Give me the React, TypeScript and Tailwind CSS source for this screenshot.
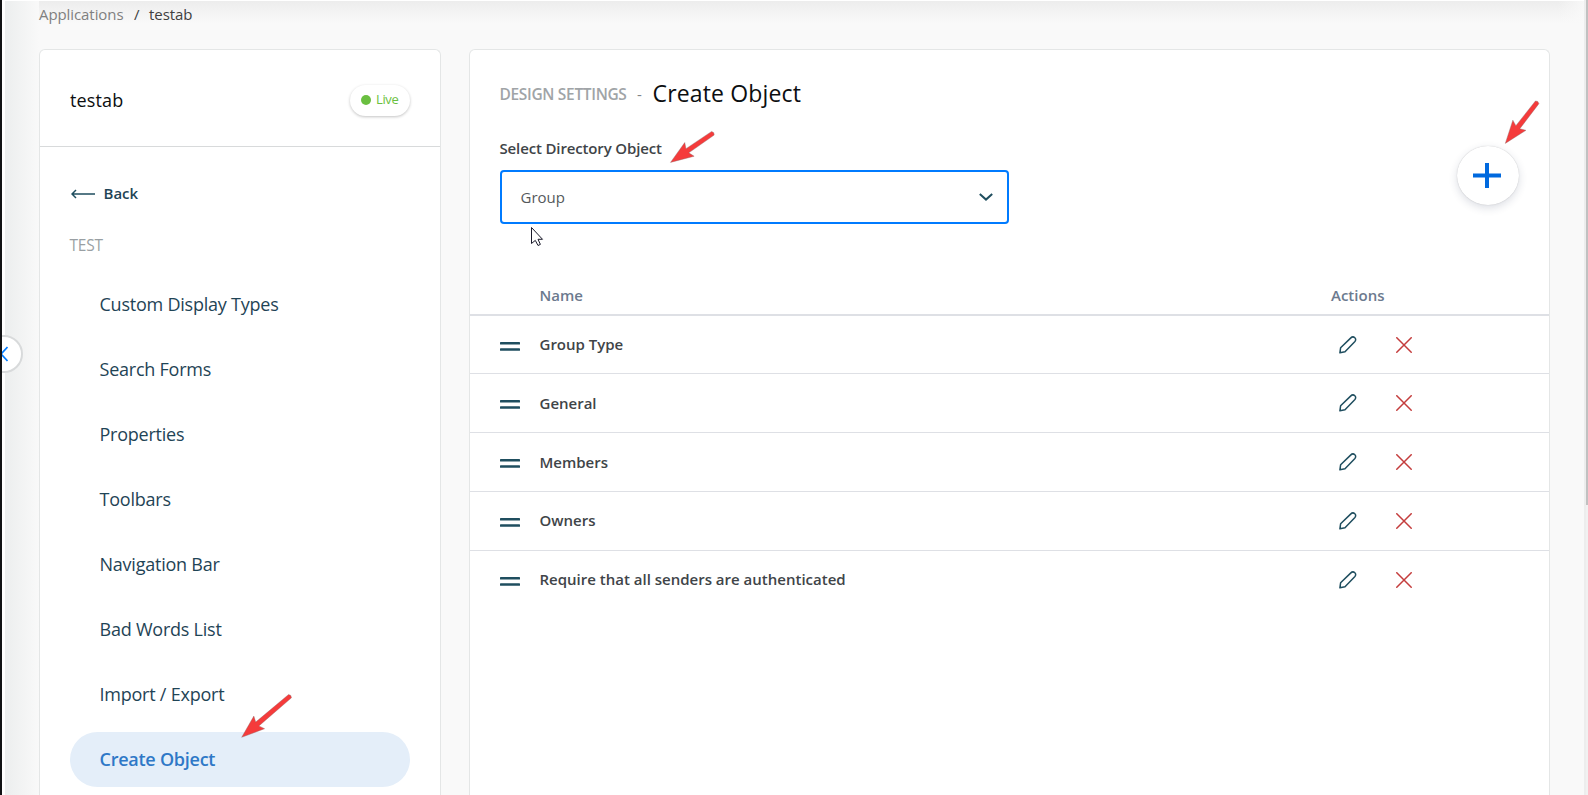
import React from "react";

const navItems = [
  "Custom Display Types",
  "Search Forms",
  "Properties",
  "Toolbars",
  "Navigation Bar",
  "Bad Words List",
  "Import / Export",
  "Create Object",
];

const rows = [
  { name: "Group Type", height: "h-[58px]", handle: "mt-[5px]", text: "", icons: "" },
  { name: "General", height: "h-[59px]", handle: "mt-[3px]", text: "", icons: "" },
  { name: "Members", height: "h-[59px]", handle: "mt-[3px]", text: "", icons: "" },
  { name: "Owners", height: "h-[59px]", handle: "mt-[3px]", text: "-mt-[2px]", icons: "" },
  {
    name: "Require that all senders are authenticated",
    height: "h-[59px]",
    handle: "mt-[2px]",
    text: "-mt-[2px]",
    icons: "-mt-[2px]",
  },
];

function Pencil() {
  return (
    <svg width="18" height="18" viewBox="0 0 18 18" fill="none" stroke="#1f4e5f" strokeWidth="1.5" strokeLinejoin="round" strokeLinecap="round">
      <path d="M0.9 16.8 L1.6 11.8 L11.6 2.1 C12.9 0.8 14.6 0.6 15.8 1.7 C17 2.8 16.9 4.5 15.7 5.8 L6 15.7 Z" />
    </svg>
  );
}

function Cross() {
  return (
    <svg width="16" height="16" viewBox="0 0 16 16" fill="none" stroke="#c43d3d" strokeWidth="1.5">
      <path d="M0.3 0.3 L15.7 15.7 M15.7 0.3 L0.3 15.7" />
    </svg>
  );
}

function Pointer({ x, y, angle, length }: { x: number; y: number; angle: number; length: number }) {
  return (
    <g transform={`translate(${x} ${y}) rotate(${angle})`}>
      <path
        d={`M0 0 L23 -8.3 L20.5 -2.5 L${length - 1} -2.2 L${length} 0 L${length - 1} 2.2 L20.5 2.5 L23 8.3 Z`}
        fill="#f53b3b"
        stroke="#8a6a6a"
        strokeOpacity="0.6"
        strokeWidth="0.6"
      />
    </g>
  );
}

export default function App() {
  return (
    <div className="relative flex h-[795px] w-[1588px] overflow-hidden bg-[#f9f9f9] font-['Open_Sans',sans-serif]">
      <div className="w-[2px] shrink-0 bg-[#111214]" />
      <div className="w-[3px] shrink-0 bg-white" />
      <div className="w-[34px] shrink-0 bg-gradient-to-r from-[#eceeee] to-[#f9f9f9]" />

      <div className="flex min-w-0 flex-1 flex-col">
        <header className="flex h-[49px] shrink-0 flex-col">
          <div className="-ml-[34px] h-px shrink-0 bg-white" />
          <div className="relative flex h-[22px] items-start bg-gradient-to-b from-[#ededed] to-[#f9f9f9] pt-[2px] text-[15px] leading-[23px]">
            <span className="w-[95px] tracking-[-0.08px] text-[#808080]">Applications</span>
            <span className="w-[15px] text-[#404040]">/</span>
            <span className="tracking-[-0.05px] text-[#404040]">testab</span>
            <div className="absolute inset-y-0 right-0 w-[30px] bg-gradient-to-r from-[#f9f9f9]/0 to-[#f9f9f9]" />
          </div>
        </header>

        <div className="flex min-h-0 flex-1 gap-[28px]">
          <aside className="w-[402px] shrink-0 rounded-t-[6px] border border-b-0 border-[#e4e6e6] bg-white">
            <div className="flex h-[97px] items-center justify-between border-b border-[#d8dadb] pr-[30px] pl-[30px]">
              <span className="pt-[4px] text-[18px] font-medium tracking-[0.15px] text-[#0c0e10]">testab</span>
              <span className="mt-[4px] flex h-[31px] w-[60px] items-center gap-[5px] rounded-full pl-[11px] text-[13px] tracking-[-0.35px] text-[#6abf40] shadow-[0_1px_3px_rgba(0,0,0,0.24)]">
                <i className="h-[10px] w-[10px] rounded-full bg-[#6abf40]" />
                <span className="-mt-px">Live</span>
              </span>
            </div>
            <div className="flex h-[92px] items-center gap-[9px] pl-[31px] text-[15px] font-semibold text-[#1f4456]">
              <svg className="mt-[2px] -ml-[0.5px]" width="24" height="10" viewBox="0 0 24 10" fill="none" stroke="#1f4e5f" strokeWidth="1.5">
                <path d="M24 5 H1.2 M5 1 L1 5 L5 9" />
              </svg>
              <span>Back</span>
            </div>
            <div className="-mt-[5px] h-[43px] pl-[29.5px] text-[15.5px] leading-[22px] tracking-[-0.25px] text-[#999fa3]">TEST</div>
            <nav className="flex flex-col gap-[10px] px-[30px]">
              {navItems.map((item) => (
                <a
                  key={item}
                  className={
                    item === "Create Object"
                      ? "flex h-[55px] items-center rounded-full bg-[#e4eef9] pl-[29.5px] text-[18px] font-semibold tracking-[-0.25px] text-[#2e78c7]"
                      : "flex h-[55px] items-center pl-[29.5px] text-[18px] tracking-[-0.23px] text-[#1f4456]"
                  }
                >
                  {item}
                </a>
              ))}
            </nav>
          </aside>

          <main className="w-[1081px] shrink-0 rounded-t-[6px] border border-b-0 border-[#e4e6e6] bg-white">
            <div className="flex h-[215px] justify-between pr-[30px] pl-[30px]">
              <div className="pt-[26px]">
                <h1 className="flex h-[34px] items-start">
                  <span className="-ml-[0.5px] w-[137.5px] pt-[7px] text-[15.5px] leading-[23px] font-semibold tracking-[-0.33px] text-[#a0a4a7]">
                    DESIGN SETTINGS
                  </span>
                  <span className="w-[16px] pt-[7px] text-[15px] leading-[23px] text-[#808488]">-</span>
                  <span className="-ml-[0.5px] text-[23px] leading-[34px] font-medium tracking-[0.15px] text-[#0c0e10]">Create Object</span>
                </h1>
                <label className="mt-[27px] -ml-[0.5px] block text-[15px] leading-[22px] font-semibold tracking-[-0.14px] text-[#404448]">
                  Select Directory Object
                </label>
                <div className="mt-[11px] flex h-[54px] w-[509px] items-center justify-between rounded-[4px] border-2 border-[#007bff] pr-[14px] pl-[18.5px] text-[15px] text-[#55595c]">
                  Group
                  <svg width="14" height="8" viewBox="0 0 14 8" fill="none" stroke="#1f4e5f" strokeWidth="2">
                    <path d="M0.8 1 L7 6.6 L13.2 1" />
                  </svg>
                </div>
              </div>
              <button className="mt-[96px] flex h-[59px] w-[62px] items-center justify-center rounded-[50%] bg-white shadow-[0_3px_8px_rgba(40,50,90,0.16),0_0_1px_rgba(0,0,0,0.25)]">
                <svg className="-ml-[2px]" width="28" height="25" viewBox="0 0 28 25" stroke="#0069de" strokeWidth="4">
                  <path d="M0 12.5 H28 M14 0 V25" />
                </svg>
              </button>
            </div>
            <div className="flex h-[51px] items-center border-b-2 border-[#dee0e5] pt-[11px] pl-[69.5px] text-[15px] font-semibold text-[#6c7a8e]">
              <span className="w-[791.5px]">Name</span>
              <span>Actions</span>
            </div>
            {rows.map((row, i) => (
              <div
                key={row.name}
                className={`flex items-center pl-[30px] ${row.height} ${i < rows.length - 1 ? "border-b border-[#dee0e5]" : ""}`}
              >
                <svg className={`mr-[19.5px] ${row.handle}`} width="20" height="10" viewBox="0 0 20 10" fill="#1f4e5f">
                  <rect y="0" width="20" height="2.6" rx="0.6" />
                  <rect y="6.2" width="20" height="2.6" rx="0.6" />
                </svg>
                <span className={`w-[799px] text-[15px] font-semibold text-[#404448] ${row.text}`}>{row.name}</span>
                <span className={`flex items-center gap-[39.5px] ${row.icons}`}>
                  <Pencil />
                  <Cross />
                </span>
              </div>
            ))}
          </main>
        </div>
      </div>

      <div className="absolute top-0 right-0 flex h-full w-[4px] border-l-2 border-[#ededed] bg-[#f1f1f1]">
        <div className="h-[505px] w-[2px] bg-[#c1c1c1]" />
      </div>

      <div className="absolute top-[335px] left-[2px] h-[38px] w-[21px] overflow-hidden">
        <div className="-ml-[17px] flex h-[38px] w-[38px] items-center justify-center rounded-full border-2 border-[#d8dadb] bg-white">
          <svg width="8" height="16" viewBox="0 0 8 16" fill="none" stroke="#007bff" strokeWidth="1.7">
            <path d="M7.5 1 L1 8 L7.5 15" />
          </svg>
        </div>
      </div>

      <svg className="pointer-events-none absolute top-0 left-0" width="1588" height="795">
        <Pointer x={241.7} y={737.3} angle={-40.4} length={64.5} />
        <Pointer x={670.5} y={162.4} angle={-34.5} length={52.5} />
        <Pointer x={1505.3} y={143.4} angle={-52.2} length={53} />
        <path
          d="M531.5 227.5 V243.5 L535.3 240.4 L538 245.5 L540.4 244.4 L538 239.3 H542.5 Z"
          fill="#fff"
          stroke="#1a1a2a"
          strokeWidth="1"
        />
      </svg>
    </div>
  );
}
